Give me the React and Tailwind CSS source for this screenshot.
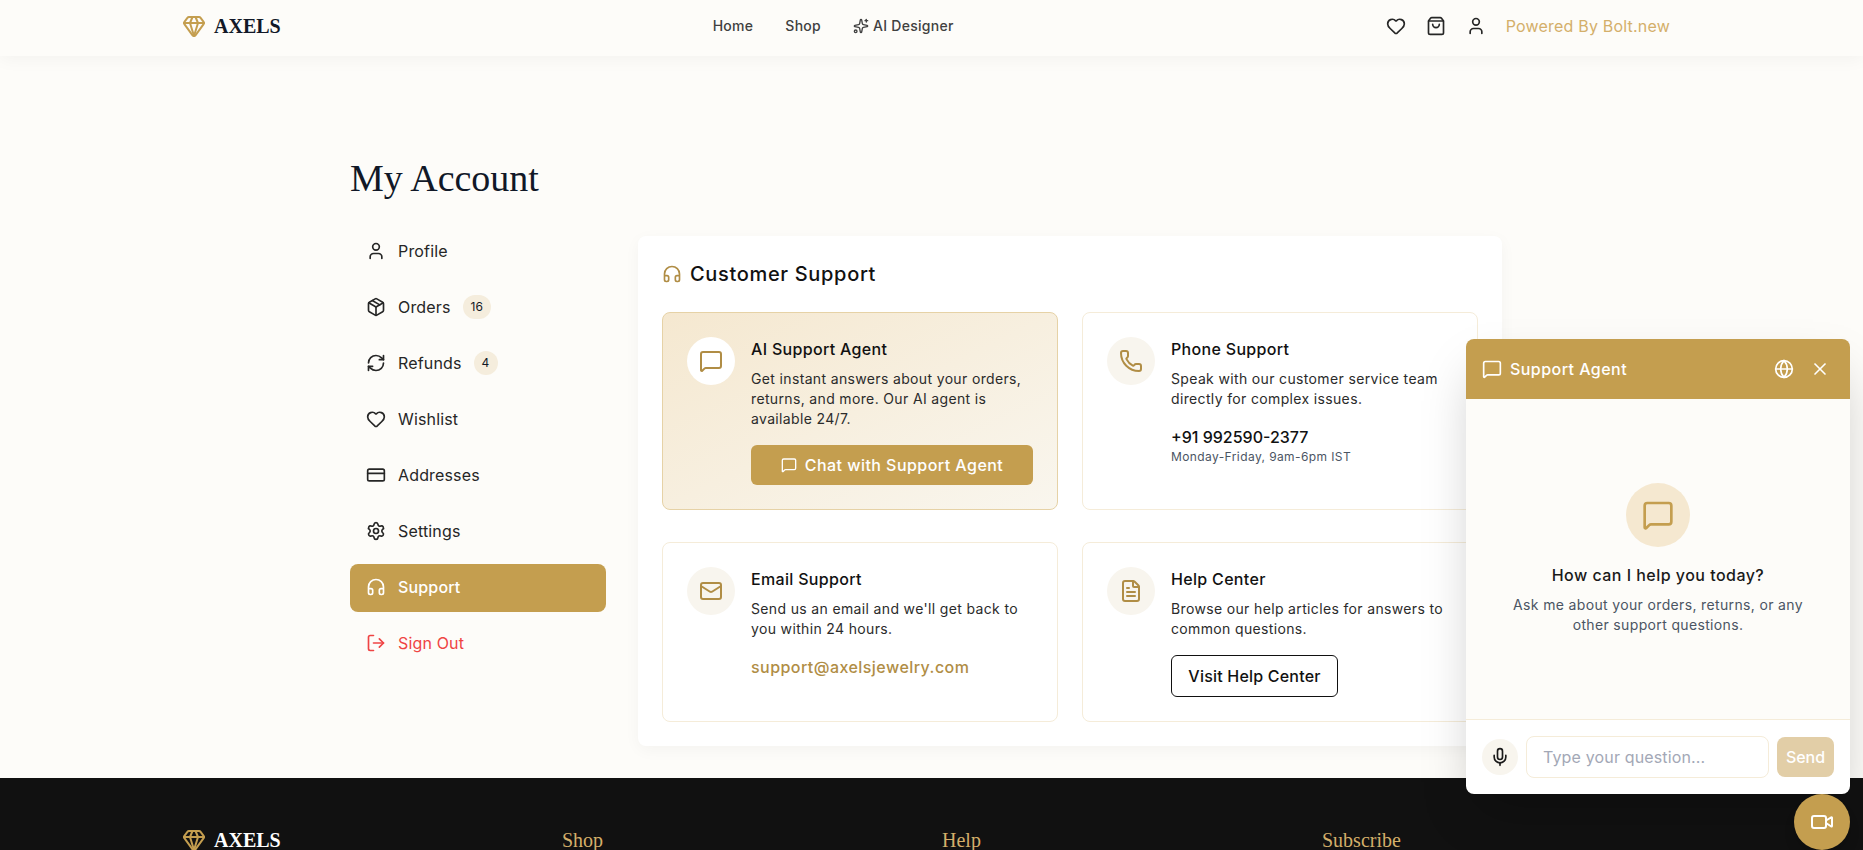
import { Gem, Sparkles, Heart, ShoppingBag, User, Package, RefreshCw, CreditCard, Settings, Headphones, LogOut, MessageSquare, Phone, Mail, FileText, Globe, X, Mic, Video } from 'lucide-react';

const serif = "font-['Liberation_Serif',serif]";

function Logo({ light }) {
    return (
        <div className="flex h-5 items-center gap-2">
            <Gem size={24} className="shrink-0 text-[#c49e4f]" />
            <span className={`${serif} text-[20px] leading-5 font-bold ${light ? 'text-white' : 'text-[#111827]'}`}>AXELS</span>
        </div>
    );
}

function SideItem({ icon: Icon, label, badge, active, danger }) {
    let color = 'text-[#262626]';
    if (active) color = 'bg-[#c49e4f] text-white font-medium';
    if (danger) color = 'text-[#ef4444]';

    return (
        <div className={`flex h-12 items-center gap-3 rounded-lg px-4 pb-0.5 text-base tracking-[0.01em] ${color}`}>
            <Icon size={20} />
            <span>{label}</span>
            {badge && <span className="rounded-full bg-[#f5eddd] px-2 py-1 text-xs leading-4 text-[#111827]">{badge}</span>}
        </div>
    );
}

function SupportCard({ icon: Icon, title, text, featured, children }) {
    const box = featured
        ? 'border-[#e6d2a6] bg-linear-to-br from-[#f5e8d0] to-[#f9f6ee]'
        : 'border-[#f5ecd9] bg-white';

    return (
        <div className={`flex gap-4 rounded-lg border p-6 ${box}`}>
            <div className={`flex h-12 w-12 shrink-0 items-center justify-center rounded-full ${featured ? 'bg-white' : 'bg-[#f8f5ee]'}`}>
                <Icon size={24} className="text-[#b08d45]" />
            </div>
            <div className="flex-1">
                <h3 className="mb-2 text-base font-medium tracking-[0.02em] text-[#111111]">{title}</h3>
                <p className="text-sm tracking-[0.35px] text-[#2b2b2b]">{text}</p>
                {children}
            </div>
        </div>
    );
}

function ChatWidget() {
    return (
        <div className="absolute top-[339px] left-[1466px] flex h-[455px] w-[384px] flex-col overflow-hidden rounded-lg bg-white shadow-2xl">
            <div className="flex h-[60px] items-center justify-between bg-[#c49e4f] px-4 text-white">
                <div className="flex items-center gap-2">
                    <MessageSquare size={20} />
                    <span className="text-base font-medium tracking-[0.45px]">Support Agent</span>
                </div>
                <div className="flex items-center gap-2">
                    <button className="p-1"><Globe size={20} /></button>
                    <button className="p-1"><X size={20} /></button>
                </div>
            </div>
            <div className="flex flex-1 flex-col items-center justify-center border-b border-[#f5ecd9] bg-[#fdfcf9] text-center">
                <div className="mb-4 flex h-16 w-16 items-center justify-center rounded-full bg-[#f5e8d0]">
                    <MessageSquare size={32} className="text-[#c49e4f]" />
                </div>
                <h4 className="mb-2 text-base font-medium tracking-[0.47px] text-[#1a1a1a]">How can I help you today?</h4>
                <p className="w-[310px] text-sm tracking-[0.35px] text-[#4b5563]">Ask me about your orders, returns, or any other support questions.</p>
            </div>
            <div className="flex items-center gap-2 p-4">
                <button className="flex h-9 w-9 shrink-0 items-center justify-center rounded-full bg-[#f8f5ee] text-[#1a1a1a]">
                    <Mic size={20} />
                </button>
                <input
                    placeholder="Type your question..."
                    className="h-[42px] min-w-0 flex-1 rounded-lg border border-[#f5ecd9] px-4 text-base tracking-[0.15px] placeholder:text-[#a3a8b6]"
                />
                <button className="h-10 w-[57px] rounded-lg bg-[#e2cea7] text-base font-medium text-white">Send</button>
            </div>
        </div>
    );
}

export default function App() {
    const menu = [
        { icon: User, label: 'Profile' },
        { icon: Package, label: 'Orders', badge: '16' },
        { icon: RefreshCw, label: 'Refunds', badge: '4' },
        { icon: Heart, label: 'Wishlist' },
        { icon: CreditCard, label: 'Addresses' },
        { icon: Settings, label: 'Settings' },
        { icon: Headphones, label: 'Support', active: true },
        { icon: LogOut, label: 'Sign Out', danger: true },
    ];

    return (
        <div className="relative h-[850px] overflow-hidden bg-[#fdfcf9] pr-[11px] font-['Inter','Liberation_Sans',sans-serif]">
            <header className="relative z-10 -mr-[11px] h-14 bg-[#fdfcf9] pr-[11px] shadow-[0_4px_16px_rgba(0,0,0,0.04)]">
                <div className="mx-auto flex h-[52px] max-w-[1536px] items-center justify-between px-6">
                    <Logo />
                    <nav className="flex items-center gap-8 text-sm font-medium tracking-[0.02em] text-[#404040]">
                        <span>Home</span>
                        <span>Shop</span>
                        <span className="flex items-center gap-1"><Sparkles size={16} />AI Designer</span>
                    </nav>
                    <div className="flex items-center gap-5 text-[#262626]">
                        <Heart size={20} />
                        <ShoppingBag size={20} />
                        <User size={20} />
                        <span className="text-base tracking-[0.2px] text-[#d4af6a]">Powered By Bolt.new</span>
                    </div>
                </div>
            </header>

            <main className="mx-auto w-[1152px] pt-[102px] pb-8">
                <h1 className={`${serif} mb-[30px] h-10 text-[38px] leading-10 text-[#111827]`}>My Account</h1>
                <div className="flex items-start gap-8">
                    <aside className="flex w-64 shrink-0 flex-col gap-2">
                        {menu.map((item) => <SideItem key={item.label} {...item} />)}
                    </aside>
                    <section className="mt-2 flex-1 rounded-lg bg-white p-6 shadow-[0_4px_16px_rgba(0,0,0,0.04)]">
                        <h2 className="mb-6 flex h-7 items-center gap-2 text-xl font-medium tracking-[0.67px] text-[#111111]">
                            <Headphones size={20} className="text-[#b08d45]" />
                            Customer Support
                        </h2>
                        <div className="grid grid-cols-2 gap-x-6 gap-y-8">
                            <SupportCard featured icon={MessageSquare} title="AI Support Agent" text="Get instant answers about your orders, returns, and more. Our AI agent is available 24/7.">
                                <button className="mt-4 flex h-10 w-full items-center justify-center gap-2 rounded-md bg-[#c49e4f] text-base font-medium tracking-[0.46px] text-white">
                                    <MessageSquare size={16} />
                                    Chat with Support Agent
                                </button>
                            </SupportCard>
                            <SupportCard icon={Phone} title="Phone Support" text="Speak with our customer service team directly for complex issues.">
                                <p className="mt-4 text-base font-medium text-[#111111]">+91 992590-2377</p>
                                <p className="text-xs tracking-[0.4px] text-[#4b5563]">Monday-Friday, 9am-6pm IST</p>
                            </SupportCard>
                            <SupportCard icon={Mail} title="Email Support" text="Send us an email and we'll get back to you within 24 hours.">
                                <p className="mt-4 text-base font-medium tracking-[0.45px] text-[#b08d45]">support@axelsjewelry.com</p>
                            </SupportCard>
                            <SupportCard icon={FileText} title="Help Center" text="Browse our help articles for answers to common questions.">
                                <button className="mt-4 h-[42px] w-[167px] rounded-md border border-[#111111] text-base font-medium tracking-[0.2px] text-[#111111]">Visit Help Center</button>
                            </SupportCard>
                        </div>
                    </section>
                </div>
            </main>

            <footer className="-mr-[11px] h-[200px] bg-[#111111] pt-[52px] pr-[11px]">
                <div className="mx-auto grid max-w-[1536px] grid-cols-4 gap-8 px-6">
                    <Logo light />
                    <h4 className={`${serif} text-xl leading-5 text-[#d4af6a]`}>Shop</h4>
                    <h4 className={`${serif} text-xl leading-5 text-[#d4af6a]`}>Help</h4>
                    <h4 className={`${serif} text-xl leading-5 text-[#d4af6a]`}>Subscribe</h4>
                </div>
            </footer>

            <ChatWidget />
            <button className="absolute top-[794px] left-[1794px] flex h-14 w-14 items-center justify-center rounded-full bg-[#c49e4f] text-white shadow-lg">
                <Video size={24} />
            </button>
        </div>
    );
}
